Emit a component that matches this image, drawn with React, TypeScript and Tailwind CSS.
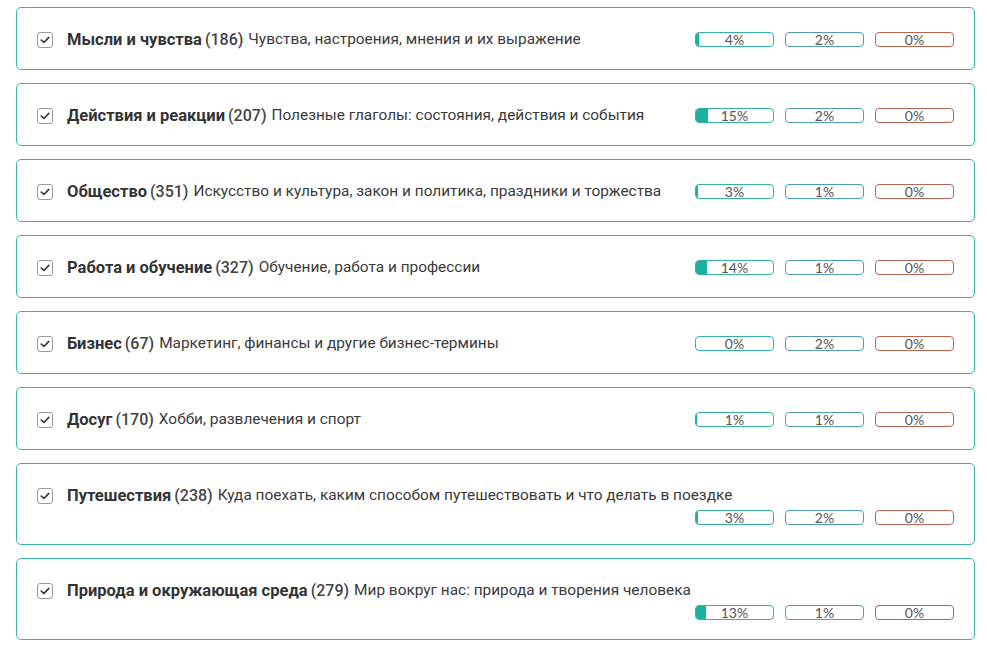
const rows = [
  { title: "Мысли и чувства", count: 186, desc: "Чувства, настроения, мнения и их выражение", p: [4, 2, 0] },
  { title: "Действия и реакции", count: 207, desc: "Полезные глаголы: состояния, действия и события", p: [15, 2, 0] },
  { title: "Общество", count: 351, desc: "Искусство и культура, закон и политика, праздники и торжества", p: [3, 1, 0] },
  { title: "Работа и обучение", count: 327, desc: "Обучение, работа и профессии", p: [14, 1, 0] },
  { title: "Бизнес", count: 67, desc: "Маркетинг, финансы и другие бизнес-термины", p: [0, 2, 0] },
  { title: "Досуг", count: 170, desc: "Хобби, развлечения и спорт", p: [1, 1, 0] },
  { title: "Путешествия", count: 238, desc: "Куда поехать, каким способом путешествовать и что делать в поездке", p: [3, 2, 0] },
  { title: "Природа и окружающая среда", count: 279, desc: "Мир вокруг нас: природа и творения человека", p: [13, 1, 0] },
];

const borders = ["border-[#35b0a4]", "border-[#4f9db0]", "border-[#b9624f]"];

function Check() {
  return (
    <span className="w-4 h-4 shrink-0 rounded-[3px] border border-[#9a9a9a] bg-white flex items-center justify-center">
      <svg width="10" height="8" viewBox="0 0 10 8" fill="none">
        <path d="M1.2 4l2.7 2.5L8.8 1.4" stroke="#333" strokeWidth="1.6" strokeLinecap="round" strokeLinejoin="round" />
      </svg>
    </span>
  );
}

function Bar({ value, i }: { value: number; i: number }) {
  return (
    <div className={`relative w-[79px] h-[15px] rounded-[4px] border overflow-hidden ${borders[i]}`}>
      {i === 0 && <div className="absolute left-0 top-0 bottom-0 bg-[#17b3a0]" style={{ width: `${value}%` }} />}
      <div className="relative text-center text-[14px] leading-[13px] text-[#555] font-['Lato',sans-serif]">
        {value}%
      </div>
    </div>
  );
}

export default function App() {
  return (
    <div className="min-h-screen bg-white pt-[7px] pl-[16px] pr-[12px] font-['Roboto','Liberation_Sans',sans-serif]">
      <div className="flex flex-col gap-[13px]">
        {rows.map((r) => (
          <div
            key={r.title}
            className="border border-[#3cb3a8] rounded-[5px] px-[20px] pt-[20px] pb-[19px] flex flex-wrap items-center gap-y-[4px]"
          >
            <div className="flex items-center h-[22px] pt-[2px] text-[#3a3a3a]">
              <Check />
              <span className="ml-[14px] text-[16.5px] font-bold text-[#333]">{r.title}</span>
              <span className="ml-[3px] text-[16px] font-medium text-[#444]">({r.count})</span>
              <span className="ml-[5px] text-[15.4px]">{r.desc}</span>
            </div>
            <div className="ml-auto pl-[12px] flex items-center gap-[11px]">
              {r.p.map((v, i) => (
                <Bar key={i} value={v} i={i} />
              ))}
            </div>
          </div>
        ))}
      </div>
    </div>
  );
}
